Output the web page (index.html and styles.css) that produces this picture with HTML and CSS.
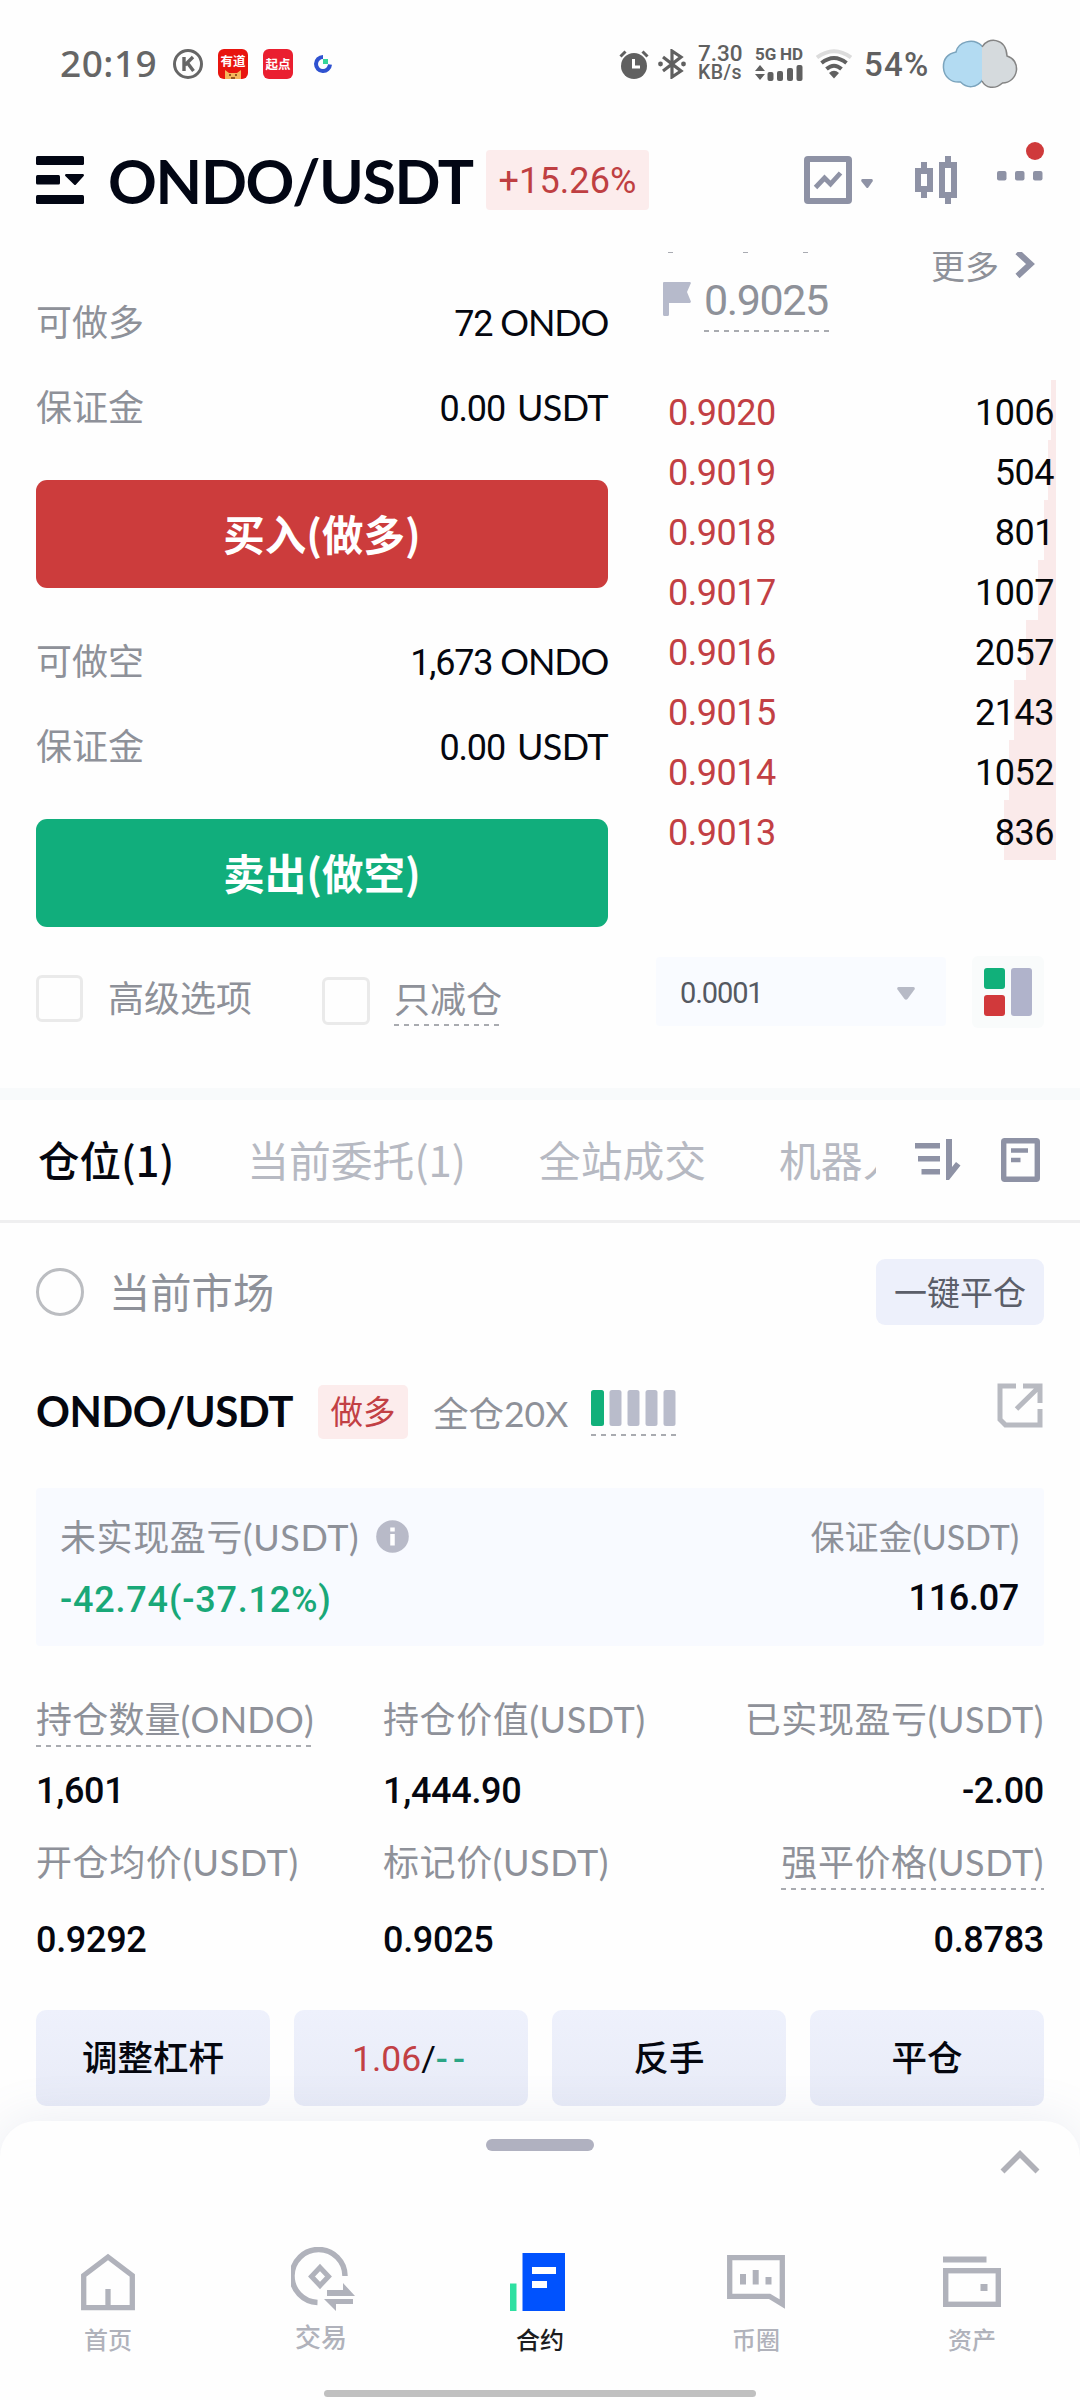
FILE: index.html
```html
<!DOCTYPE html>
<html lang="zh-CN">
<head>
<meta charset="utf-8">
<title>ONDO/USDT</title>
<link rel="stylesheet" href="styles.css">
</head>
<body>
<div class="screen">
  <header class="status">
    <span class="clock">20:19</span>
    <svg class="st-k" width="30" height="30" viewBox="0 0 30 30"><circle cx="15" cy="15" r="13.5" fill="none" stroke="#666" stroke-width="3"/><path d="M11 8v14M20 8l-8 8M14.500 14l6 8" fill="none" stroke="#666" stroke-width="3.400"/></svg>
    <span class="app app-youdao">有道<svg width="16" height="9" viewBox="0 0 16 9"><path d="M0 9V0l4 3h8l4-3v9z" fill="#f5b65c"/><path d="M4 5h2M10 5h2M6 8h4" stroke="#7a3a10" stroke-width="1.500"/></svg></span>
    <span class="app app-qidian">起点</span>
    <svg class="st-c" width="18" height="18" viewBox="0 0 18 18"><path d="M9 2A7 7 0 1 0 16 9.500" fill="none" stroke="#2f52d0" stroke-width="4"/><path d="M9 4h5v5H9z" fill="#35d69a"/></svg>
    <span class="grow"></span>
    <svg class="st-alarm" width="30" height="30" viewBox="0 0 30 30"><circle cx="15" cy="17" r="13" fill="#606060"/><path d="M1.500 7.500L6.500 2.500M28.500 7.500L23.500 2.500" stroke="#606060" stroke-width="3"/><path d="M14.500 10v8H21" fill="none" stroke="#fff" stroke-width="3"/></svg>
    <svg class="st-bt" width="28" height="30" viewBox="0 0 28 30"><path d="M5 8l18 14-9 6V2l9 6L5 22" fill="none" stroke="#606060" stroke-width="3.200"/><circle cx="2.500" cy="15" r="2.400" fill="#606060"/><circle cx="25.500" cy="15" r="2.400" fill="#606060"/></svg>
    <span class="speed"><span class="speed-n">7.30</span><span class="speed-u">KB/s</span></span>
    <span class="cell">
      <span class="cell-t"><span>5G</span><span>HD</span></span>
      <svg width="48" height="17" viewBox="0 0 48 17"><path d="M0 7l5-6 5 6zM0 10h10l-5 6z" fill="#606060"/><g fill="#606060"><rect x="12.500" y="8" width="6" height="9" rx="2"/><rect x="22" y="7" width="6" height="10" rx="2"/><rect x="32" y="4" width="6" height="13" rx="2"/><rect x="41.500" y="1" width="6" height="16" rx="2"/></g></svg>
    </span>
    <svg class="st-wifi" width="36" height="30" viewBox="0 0 36 30"><g fill="none"><path d="M1 8.500Q18-4 35 8.500" stroke="#dcdcdc" stroke-width="4"/><path d="M5.500 14Q18 4 30.500 14" stroke="#606060" stroke-width="4"/><path d="M10.500 20Q18 13.500 25.500 20" stroke="#606060" stroke-width="4"/></g><path d="M13 24q5-4.500 10 0l-5 5.500z" fill="#606060"/></svg>
    <span class="pct">54%</span>
    <svg class="st-cloud" width="76" height="52" viewBox="0 0 76 52"><path d="M40 8C31-1 16 4 14 14 5 16 1 22 1.500 30c.5 9 8 15 17 14 7 7 16 6 22-2z" fill="#b3dbf2"/><path d="M40 8C31-1 16 4 14 14 5 16 1 22 1.500 30c.5 9 8 15 17 14 7 7 16 6 22-2" fill="none" stroke="#7ba4bd" stroke-width="1.500"/><path d="M40 9C45-1 64-1 65 18c7 2 10 8 9.500 14-1 8-7 13-14 13-8 7-17 5-20.500-2z" fill="#d5dadd"/><path d="M40 9C45-1 64-1 65 18c7 2 10 8 9.500 14-1 8-7 13-14 13-8 7-17 5-20.500-2" fill="none" stroke="#858585" stroke-width="1.500"/></svg>
  </header>

  <header class="topbar">
    <svg width="48" height="48" viewBox="0 0 48 48"><g fill="#020614"><rect width="48" height="9" rx="1.500"/><rect y="19" width="24" height="9.500" rx="1.500"/><rect y="39" width="48" height="9" rx="1.500"/><path d="M30 18h17q1.500.5.700 2L40 28.500q-1 1-2 0L29.300 20q-.8-1.500.7-2z"/></g></svg>
    <h1 class="pair">ONDO/USDT</h1>
    <span class="change">+15.26%</span>
    <span class="grow"></span>
    <svg class="ic-chart" width="70" height="48" viewBox="0 0 70 48"><rect x="3" y="3" width="42" height="42" rx="1" fill="none" stroke="#8e92a5" stroke-width="6"/><path d="M11.500 31.500L20.500 22l6 6L36.500 17" fill="none" stroke="#8e92a5" stroke-width="4.800"/><path d="M58.500 23h9q2 .5 1 2.500L64.300 31.500q-1 1-2 0L57.500 25.500q-1-2 1-2.500z" fill="#8e92a5"/></svg>
    <svg class="ic-candle" width="42" height="48" viewBox="0 0 42 48"><g fill="none" stroke="#8e92a5"><rect x="3" y="15" width="12" height="18" stroke-width="6"/><rect x="27" y="9" width="12" height="30" stroke-width="6"/><path d="M9 6v6M9 36v6M33 0v6M33 42v6" stroke-width="6"/></g></svg>
    <svg class="ic-more" width="47" height="54" viewBox="0 0 47 54"><g fill="#8e92a5"><rect y="29" width="9.500" height="9.500" rx="2"/><rect x="18" y="29" width="9.500" height="9.500" rx="2"/><rect x="36" y="29" width="9.500" height="9.500" rx="2"/></g><circle cx="38" cy="9" r="9" fill="#cf3a3b"/></svg>
  </header>

  <main class="trade">
    <section class="order">
      <div class="row"><span class="lbl">可做多</span><span class="val"><b>72</b><i class="tight">ONDO</i></span></div>
      <div class="row"><span class="lbl">保证金</span><span class="val"><b>0.00</b><i>USDT</i></span></div>
      <button class="buy">买入(做多)</button>
      <div class="row"><span class="lbl">可做空</span><span class="val"><b>1,673</b><i class="tight">ONDO</i></span></div>
      <div class="row"><span class="lbl">保证金</span><span class="val"><b>0.00</b><i>USDT</i></span></div>
      <button class="sell">卖出(做空)</button>
      <div class="checks">
        <span class="box"></span><span class="ck1">高级选项</span>
        <span class="box box2"></span><span class="ck2 dash">只减仓</span>
      </div>
    </section>

    <section class="book">
      <div class="mark">
        <div class="mark-l">
          <svg class="ticks" width="150" height="2" viewBox="0 0 150 2"><path d="M5 .5h5M80 .5h5M140 .5h5" stroke="#a9abb2"/></svg>
          <div class="mark-p">
            <svg width="28" height="34" viewBox="0 0 28 34"><path d="M1 0h26q1.500.5.500 2l-3.500 8 3.500 8.500q1 1.500-.5 2.500H6v11.500q0 1.500-1.500 1.500H1.500Q0 34 0 32.500V1q0-1 1-1z" fill="#b6bacb"/></svg>
            <span class="price dash">0.9025</span>
          </div>
        </div>
        <div class="more">更多<svg width="22" height="30" viewBox="0 0 22 30"><path d="M3.500 2L16.500 14 3.500 26" fill="none" stroke="#8e92a5" stroke-width="6"/></svg></div>
      </div>
      <ul class="asks">
        <li><em>0.9020</em><span>1006</span><u style="width:5px"></u></li>
        <li><em>0.9019</em><span>504</span><u style="width:8px"></u></li>
        <li><em>0.9018</em><span>801</span><u style="width:12px"></u></li>
        <li><em>0.9017</em><span>1007</span><u style="width:18px"></u></li>
        <li><em>0.9016</em><span>2057</span><u style="width:30px"></u></li>
        <li><em>0.9015</em><span>2143</span><u style="width:42px"></u></li>
        <li><em>0.9014</em><span>1052</span><u style="width:47px"></u></li>
        <li><em>0.9013</em><span>836</span><u style="width:52px"></u></li>
      </ul>
      <div class="depth">
        <div class="select"><span>0.0001</span><svg width="18" height="13" viewBox="0 0 18 13"><path d="M1.500 0h15q2 .5 1 2.500L10.500 12q-1.500 1.500-3 0L.5 2.500q-1-2 1-2.500z" fill="#b7bac6"/></svg></div>
        <div class="layout"><svg width="48" height="48" viewBox="0 0 48 48"><rect width="21" height="21" rx="3" fill="#11b07a"/><rect y="27" width="21" height="21" rx="3" fill="#d1393b"/><rect x="27" width="21" height="48" rx="3" fill="#b0b3cb"/></svg></div>
      </div>
    </section>
  </main>

  <nav class="tabs">
    <div class="tab-list"><span class="on">仓位(1)</span><span>当前委托(1)</span><span>全站成交</span><span>机器人</span></div>
    <svg class="ic-sort" width="46" height="42" viewBox="0 0 46 42"><g fill="#8e92a5"><rect y="4" width="25" height="5.500"/><rect x="3" y="17" width="22" height="5.500"/><rect x="6.500" y="30" width="18.500" height="5.500"/><path d="M31 0h6v28l4-5 4.500 3.500L34 41h-3z"/></g></svg>
    <svg width="39" height="44" viewBox="0 0 39 44"><rect x="2.700" y="2.700" width="33.600" height="38.600" rx="1" fill="none" stroke="#8e92a5" stroke-width="5.400"/><path d="M10 12.500h17M10 22h9.500" stroke="#8e92a5" stroke-width="4.500"/></svg>
  </nav>

  <section class="positions">
    <div class="filter"><span class="radio"></span><span class="market">当前市场</span><button class="close-all">一键平仓</button></div>
    <div class="pos-head">
      <span class="sym">ONDO/USDT</span><span class="side">做多</span><span class="lev">全仓20X</span>
      <span class="risk dash"><svg width="85" height="36" viewBox="0 0 85 36"><rect width="13" height="36" rx="2.500" fill="#11b07a"/><g fill="#b9bccb"><rect x="18.500" width="12" height="36" rx="2.500"/><rect x="36.500" width="12" height="36" rx="2.500"/><rect x="54.500" width="12" height="36" rx="2.500"/><rect x="72.500" width="12" height="36" rx="2.500"/></g></svg></span>
      <span class="grow"></span>
      <svg class="ic-share" width="46" height="46" viewBox="0 0 46 46"><path d="M19 3H3v33.500L8.500 42H43V26M26 3h17v17M42 4L19.500 26" fill="none" stroke="#b8bac1" stroke-width="5"/></svg>
    </div>
    <div class="pnl">
      <div><div class="k k-info">未实现盈亏(USDT)<svg width="33" height="33" viewBox="0 0 33 33"><circle cx="16.500" cy="16.500" r="16.300" fill="#b8bac8"/><path d="M16.500 7.500v4M16.500 14v11.500" stroke="#fff" stroke-width="4.500"/></svg></div><div class="v green">-42.74(-37.12%)</div></div>
      <div class="r"><div class="k k-small">保证金(USDT)</div><div class="v">116.07</div></div>
    </div>
    <div class="stats">
      <div><div class="k k-tight"><span class="dash">持仓数量(ONDO)</span></div><div class="v">1,601</div></div>
      <div><div class="k">持仓价值(USDT)</div><div class="v">1,444.90</div></div>
      <div class="r"><div class="k">已实现盈亏(USDT)</div><div class="v">-2.00</div></div>
    </div>
    <div class="stats stats2">
      <div><div class="k">开仓均价(USDT)</div><div class="v">0.9292</div></div>
      <div><div class="k">标记价(USDT)</div><div class="v">0.9025</div></div>
      <div class="r"><div class="k"><span class="dash">强平价格(USDT)</span></div><div class="v">0.8783</div></div>
    </div>
    <div class="actions">
      <button>调整杠杆</button><button class="tpsl"><em>1.06</em>/<ins>--</ins></button><button>反手</button><button>平仓</button>
    </div>
  </section>

  <footer class="sheet">
    <div class="grab"><span></span></div>
    <div class="expand"><svg width="40" height="24" viewBox="0 0 40 24"><path d="M2.500 21.500L20 4l17.500 17.500" fill="none" stroke="#b0b1b8" stroke-width="5.600"/></svg></div>
    <div class="nav">
      <div class="n"><svg width="54" height="58" viewBox="0 0 54 58"><path d="M2.700 54.700V22.500L27 4l24.300 18.500v32.200zM27 36v19" fill="none" stroke="#b0b2bb" stroke-width="5.300"/></svg><span>首页</span></div>
      <div class="n n-ex"><svg width="64" height="64" viewBox="0 0 64 64"><path d="M26.500 55.500A26.500 26.500 0 1 1 54 29" fill="none" stroke="#b0b2bb" stroke-width="5.500"/><path d="M29 20.500l8.500 9-8.500 9-8.500-9z" fill="none" stroke="#b0b2bb" stroke-width="5"/><path d="M36 43h16v-7l12 13H36zM62 52v5H45v7L33 52z" fill="#b0b2bb"/></svg><span>交易</span></div>
      <div class="n n-on"><svg width="55" height="58" viewBox="0 0 55 58"><path d="M0 30.500h6.500V58H0z" fill="#2ee0a1"/><path d="M12.500 0H55v58H12.500z" fill="#0052fe"/><path d="M22 14h24v7H22zM22 28h15v7H22z" fill="#fff"/></svg><span>合约</span></div>
      <div class="n"><svg width="58" height="56" viewBox="0 0 58 56"><path d="M2.700 3.700h52.600V50L42.500 42.300H2.700z" fill="none" stroke="#b0b2bb" stroke-width="5.300"/><path d="M16 20v10.500M28.700 16v14.500M41.500 23v7.500" stroke="#b0b2bb" stroke-width="6"/></svg><span>币圈</span></div>
      <div class="n"><svg width="58" height="54" viewBox="0 0 58 54"><path d="M0 4.500h43.500" stroke="#b0b2bb" stroke-width="6"/><rect x="2.700" y="15.700" width="52.600" height="33.600" fill="none" stroke="#b0b2bb" stroke-width="5.400"/><path d="M37.500 29h7v7h-7z" fill="#b0b2bb"/></svg><span>资产</span></div>
    </div>
    <div class="home-bar"></div>
  </footer>
</div>
</body>
</html>
```
FILE: styles.css
```css
* { box-sizing: border-box; margin: 0; padding: 0; }
body { background: #fefefe; font-family: Lato, "Noto Sans CJK SC", sans-serif; color: #05070f; }
svg { display: block; flex: none; }
button { border: 0; font: inherit; color: inherit; display: flex; align-items: center; justify-content: center; }
i, em, ins { font-style: normal; text-decoration: none; }
.screen { width: 1080px; height: 2400px; overflow: hidden; display: flex; flex-direction: column; white-space: nowrap; background: #fefefe; }
.grow { flex: 1; }

/* status bar */
.status { height: 128px; display: flex; align-items: center; padding: 0 62px 0 60px; color: #606060; flex: none; font-family: "Noto Sans", sans-serif; }
.clock { font: 500 37px/40px "Noto Sans", sans-serif; width: 98px; letter-spacing: .5px; color: #666; margin-top: -2px; }
.st-k { margin-left: 15px; }
.app { width: 30px; height: 30px; border-radius: 6px; margin-left: 15px; color: #fff; font: 700 12.500px/30px "Noto Sans CJK SC", sans-serif; text-align: center; background: #ea1f30; }
.app-youdao { line-height: 24px; background: #e8150f; }
.app-youdao svg { margin: -3px auto 0; }
.st-c { margin-left: 21px; }
.st-bt { margin-left: 9px; }
.speed { width: 46px; margin-left: 12px; display: flex; flex-direction: column; font-family: Roboto, sans-serif; font-weight: 500; }
.speed-n { font-size: 22.500px; line-height: 19px; margin-top: -1px; }
.speed-u { font-size: 19.500px; line-height: 20px; letter-spacing: .4px; }
.cell { margin-left: 11px; width: 48px; display: flex; flex-direction: column; gap: 3px; }
.cell-t { display: flex; justify-content: space-between; font: 700 17px/14px Roboto, sans-serif; }
.st-wifi { margin-left: 13px; }
.pct { width: 67px; margin-left: 12px; font: 500 33px/40px Roboto, sans-serif; letter-spacing: 1.3px; padding-top: 1px; }
.st-cloud { margin-left: 11px; }

/* pair header */
.topbar { height: 124px; flex: none; display: flex; align-items: center; padding: 0 36px 20px 36px; }
.pair { font: 700 60.500px/70px Lato, sans-serif; letter-spacing: -1.300px; width: 367px; margin-left: 24px; padding-top: 2px; color: #020614; }
.change { width: 163px; height: 60px; margin-left: 11px; border-radius: 4px; background: #fcecec; color: #bf3f42; font: 400 36px/63px Roboto, sans-serif; text-align: center; letter-spacing: .1px; }
.ic-candle { margin-left: 41px; }
.ic-more { margin: -22px 0 0 40px; }

/* order form and order book */
.trade { height: 836px; flex: none; display: flex; overflow: hidden; }
.order { width: 572px; margin-left: 36px; padding-top: 41px; }
.row { height: 60px; display: flex; align-items: center; justify-content: space-between; font-size: 36px; }
.row + .row { margin-top: 25px; }
.lbl { color: #8e9199; line-height: 58px; padding-bottom: 2px; }
.val { display: flex; align-items: baseline; font-size: 36px; letter-spacing: -.6px; color: #05070f; padding-top: 1px; }
.val b { font: 400 36px/60px Roboto, sans-serif; letter-spacing: -1.200px; }
.val i { margin-left: 12px; font-size: 36px; }
.val .tight { margin-left: 8px; letter-spacing: -1.200px; }
.buy, .sell { width: 572px; height: 108px; margin: 42px 0 44px; border-radius: 11px; color: #fff; font: 700 41.500px/60px "Noto Sans CJK SC", sans-serif; padding-bottom: 2px; }
.buy { background: #cc3c3c; }
.sell { background: #11ae7c; margin-bottom: 0; }
.checks { display: flex; align-items: center; height: 60px; margin-top: 43px; font-size: 36px; color: #8e9199; }
.box { width: 47px; height: 47px; border: 3px solid #eaeaea; border-radius: 6px; margin-top: -3px; }
.box2 { margin: 2px 0 0 71px; width: 48px; height: 48px; }
.ck1 { margin: -8px 0 0 25px; width: 143px; }
.ck2 { margin-left: 24px; line-height: 50px; padding-bottom: 2px; }
.dash { background: repeating-linear-gradient(90deg, #a9abb0 0 5px, transparent 5px 10px) left bottom / 100% 2px no-repeat; }

.book { margin-left: 48px; width: 400px; font-family: Roboto, "Noto Sans CJK SC", sans-serif; }
.mark { height: 128px; display: flex; justify-content: space-between; overflow: hidden; }
.mark-l { padding-left: 7px; }
.mark-p { display: flex; align-items: center; gap: 13px; padding-top: 14px; }
.mark-p svg { margin-top: -2px; }
.price { color: #8e9199; font-size: 43px; line-height: 64px; width: 126px; letter-spacing: -1.400px; }
.more { display: flex; align-items: center; height: 30px; gap: 15px; font-size: 34px; line-height: 30px; color: #8e9199; margin-right: 20px; }
.more svg { margin-top: -4px; }
.asks { list-style: none; }
.asks li { height: 60px; display: flex; align-items: center; padding: 5px 2px 0 12px; font-size: 36px; letter-spacing: -.5px; position: relative; width: 400px; justify-content: space-between; }
.asks em { color: #c24044; }
.asks span { position: relative; z-index: 1; color: #060709; }
.asks u { position: absolute; right: 0; top: 0; height: 60px; background: #faeaea; }
.depth { display: flex; margin-top: 97px; gap: 26px; }
.select { width: 290px; height: 69px; background: #f9fbff; border-radius: 4px; padding: 3px 31px 0 24px; display: flex; align-items: center; justify-content: space-between; font-size: 29px; color: #555961; flex: none; letter-spacing: -1.100px; }
.layout { width: 72px; height: 72px; background: #f9fbfb; border-radius: 6px; display: flex; align-items: center; justify-content: center; flex: none; margin-top: -1px; }

/* tabs */
.tabs { height: 135px; flex: none; border-top: 12px solid #f8fafb; border-bottom: 3px solid #efeff0; display: flex; align-items: center; padding: 0 40px 0 38px; font-family: "Noto Sans CJK SC", sans-serif; }
.tab-list { width: 838px; overflow: hidden; display: flex; gap: 73px; font-size: 41.800px; line-height: 60px; color: #b6b9c2; margin-top: -2px; }
.tab-list .on { color: #05070f; font-weight: 500; font-size: 41.500px; }
.ic-sort { margin: 0 40px 0 39px; }

/* positions */
.positions { padding: 0 36px; flex: none; height: 898px; }
.filter { display: flex; align-items: center; height: 66px; margin-top: 36px; }
.radio { width: 48px; height: 48px; border: 3px solid #bbbdc1; border-radius: 50%; }
.market { font-size: 41.300px; color: #8e9199; margin: -4px 0 0 25px; flex: 1; }
.close-all { width: 168px; height: 66px; border-radius: 9px; background: #edf0fb; font-size: 33px; color: #5b5e69; padding-bottom: 2px; }
.pos-head { display: flex; align-items: center; height: 54px; margin-top: 60px; }
.sym { font-size: 42px; font-weight: 700; width: 282px; letter-spacing: -.5px; margin-top: -3px; }
.side { width: 90px; height: 54px; background: #fcecec; color: #c24044; border-radius: 5px; font-size: 32.500px; line-height: 54px; text-align: center; }
.lev { font-size: 35.500px; color: #8e9199; margin: -2px 0 0 25px; width: 158px; }
.risk { height: 46px; margin-top: 2px; }
.ic-share { margin: -13px 1px 0 0; }
.pnl { margin-top: 49px; height: 158px; background: #f8faff; border-radius: 4px; padding: 19px 25px 0 24px; display: flex; justify-content: space-between; }
.k { font-size: 36px; line-height: 60px; height: 60px; color: #8e9199; letter-spacing: .6px; }
.k-tight { letter-spacing: .2px; }
.k-info { display: flex; align-items: center; gap: 17px; }
.k-info svg { margin-top: -2px; }
.k-small { font-size: 34px; letter-spacing: 0; }
.v { font: 500 36px/62px Roboto, sans-serif; height: 60px; letter-spacing: -.3px; }
.pnl .v { line-height: 63px; }
.pnl .green { color: #19a878; letter-spacing: .8px; line-height: 66px; }
.r { text-align: right; }
.stats { margin-top: 43px; display: grid; grid-template-columns: 347px 1fr auto; }
.stats .k .dash { display: inline-block; line-height: 56px; height: 56px; }
.stats .v { margin-top: 11px; }
.stats2 { margin-top: 12px; }
.stats2 .v { margin-top: 17px; }
.actions { margin-top: 41px; display: flex; gap: 24px; }
.actions button { flex: 1; height: 96px; border-radius: 10px; background: linear-gradient(#eef1fc, #e8ebf7); font: 500 35.500px/60px Roboto, "Noto Sans CJK SC", sans-serif; padding-top: 1px; }
.actions .tpsl { font-weight: 400; }
.tpsl em { color: #c24044; }
.tpsl ins { color: #2ba585; letter-spacing: 5px; font-weight: 500; }

/* bottom sheet */
.sheet { height: 279px; flex: none; background: #fefefe; border-radius: 36px 36px 0 0; box-shadow: 0 0 50px rgba(110, 130, 170, .14); padding-top: 18px; position: relative; }
.grab { display: flex; justify-content: center; }
.grab span { width: 108px; height: 12px; border-radius: 6px; background: #b0b1c0; }
.expand { display: flex; justify-content: flex-end; padding-right: 40px; height: 94px; margin-top: -1px; }
.nav { display: grid; grid-template-columns: repeat(5, 216px); height: 120px; margin-top: -1px; }
.n { display: flex; flex-direction: column; align-items: center; padding-top: 10px; color: #b0b2bb; font-size: 24px; line-height: 30px; font-weight: 500; }
.n svg { height: 58px; }
.n span { margin-top: 14px; }
.n-ex { padding: 4px 2px 0 0; font-size: 26px; }
.n-ex svg { height: 64px; }
.n-ex span { margin: 11px 4px 0 0; }
.n-on { color: #1c1d20; }
.n-on svg { margin-right: 5px; }
.home-bar { width: 432px; height: 7px; margin: 27px auto 0; border-radius: 4px; background: #c0c0c0; }
```
